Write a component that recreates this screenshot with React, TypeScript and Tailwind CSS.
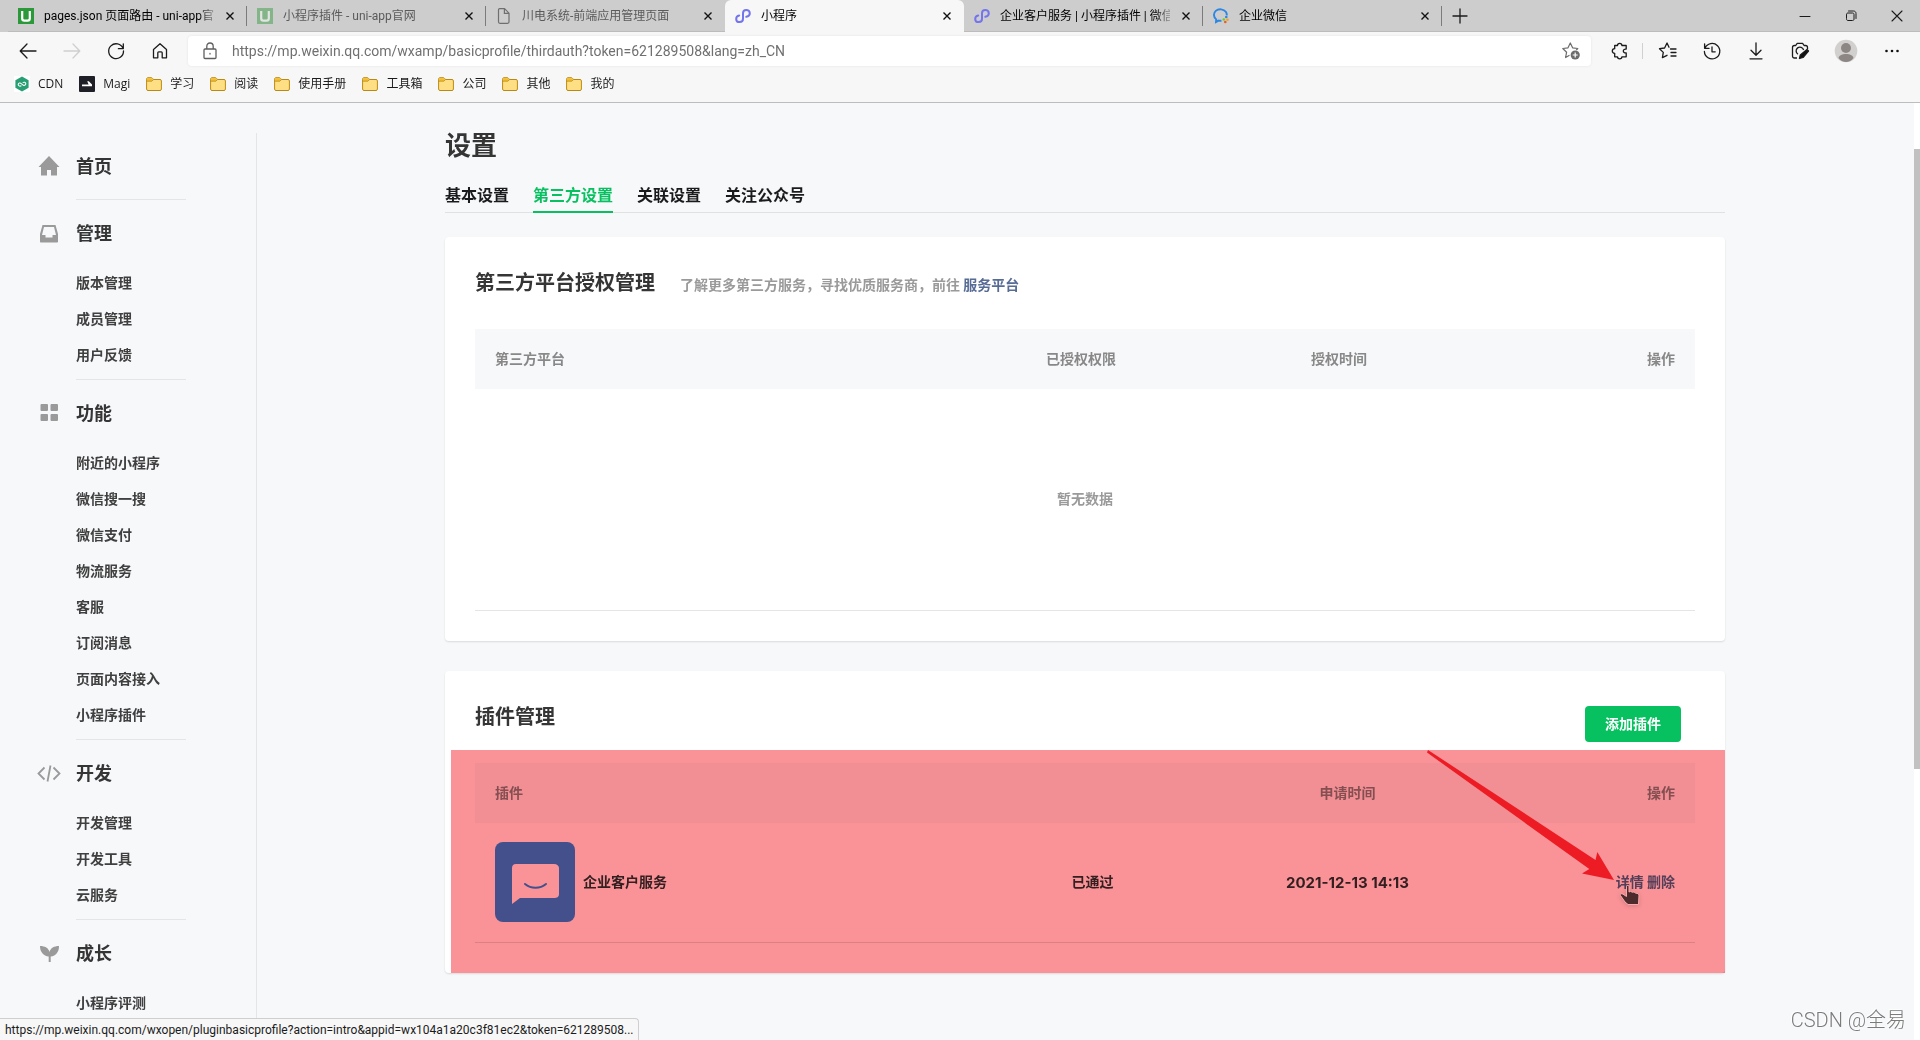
import React from "react";

const CJK = "font-['Inter','Noto_Sans_CJK_SC',sans-serif]";
const UI = "font-['Roboto','Noto_Sans_CJK_SC',sans-serif]";

type IconProps = { className?: string };

const UniIcon = ({ className = "" }: IconProps) => (
  <svg viewBox="0 0 16 16" className={`mr-0.5 h-4 w-4 ${className}`}>
    <rect width="16" height="16" fill="#2b9939" />
    <path d="M4.200 3v7.400c0 1.400.9 2.200 2.200 2.200h3.200c1.300 0 2.200-.8 2.200-2.200V3" fill="none" stroke="#fff" strokeWidth="2.200" />
  </svg>
);

const PageIcon = ({ className = "" }: IconProps) => (
  <svg viewBox="0 0 16 16" className={`mr-0.5 h-4 w-4 ${className}`} fill="none" stroke="#6f6f6f" strokeWidth="1.2">
    <path d="M3.500.7h5L13 5.200v8.600c0 .8-.5 1.500-1.400 1.500H3.900c-.9 0-1.400-.6-1.400-1.500V2.100C2.500 1.200 2.900.7 3.500.7zM8.400.9v4.500h4.500" />
  </svg>
);

const MiniIcon = ({ className = "" }: IconProps) => (
  <svg viewBox="0 0 16 16" className={`mr-0.5 h-4 w-4 ${className}`} fill="none" stroke="#7474ec" strokeWidth="2" strokeLinecap="round">
    <path d="M11.300 8.800c2-.3 3.500-1.600 3.500-3.500 0-2-1.600-3.400-3.500-3.400S8 3.300 8 5.300v5.400c0 2-1.500 3.400-3.400 3.400s-3.400-1.400-3.400-3.200c0-1.800 1.200-3 3-3.400" />
  </svg>
);

const WorkIcon = ({ className = "" }: IconProps) => (
  <svg viewBox="0 0 16 16" className={`mr-0.5 h-4 w-4 ${className}`} fill="none">
    <path d="M8.500 12.600c-.9.200-2 .2-3 0L3 14l.2-2.600C.4 9 .2 5.200 2.800 2.900c3-2.600 8-1.900 10 .9.8 1.200 1.100 2.300 1 3.500" stroke="#2a87e4" strokeWidth="1.900" />
    <circle cx="13.300" cy="9" r="1.300" fill="#2a87e4" />
    <circle cx="14.500" cy="11.800" r="1.300" fill="#f7a11b" />
    <circle cx="12.300" cy="14" r="1.300" fill="#f0562b" />
    <circle cx="10.800" cy="11.500" r="1.300" fill="#7cc623" />
  </svg>
);

const FolderIcon = () => (
  <svg viewBox="0 0 16 16" className="h-4 w-4">
    <path d="M.6 3.200C.6 2.200 1.100 1.700 2 1.700h3.300c.6 0 1 .2 1.300.7l.8 1.100H14c.9 0 1.400.5 1.400 1.400v8.200c0 .9-.5 1.400-1.400 1.400H2c-.9 0-1.400-.5-1.400-1.400z" fill="#ffdf83" stroke="#b98a13" />
    <path d="M1.100 5V3.300c0-.8.3-1.100 1-1.100h3.200c.4 0 .7.1.9.500l.9 1.200L6 5z" fill="#f3bd35" />
    <path d="M.8 5.200h5.100l1.500-1.500" fill="none" stroke="#b98a13" strokeWidth=".8" />
  </svg>
);

const CdnIcon = () => (
  <svg viewBox="0 0 16 16" className="h-4 w-4">
    <rect width="16" height="16" fill="#fff" />
    <path d="M8 .5l6.600 3.700v7.600L8 15.500l-6.600-3.700V4.200z" fill="#279e74" />
    <path d="M7.400 9.600c-1 1-3.200.6-3.200-1.100S6.400 6.600 7.300 7.600l1.500 1.300c1 .9 3 .4 3-1.200S9.700 5.800 8.700 6.700" fill="none" stroke="#fff" strokeWidth="1.100" />
  </svg>
);

const MagiIcon = () => (
  <svg viewBox="0 0 16 16" className="h-4 w-4">
    <rect width="16" height="16" rx="1" fill="#1f2027" />
    <path d="M3 8.500h10v1.800H3zM8.200 5.300h1.600L13 8.500H9.600z" fill="#fff" />
  </svg>
);

const CloseX = () => (
  <svg viewBox="0 0 8 8" className="h-2 w-2" stroke="#111" strokeWidth="1.400">
    <path d="M.5.5l7 7M7.500.5l-7 7" />
  </svg>
);

const Line = ({ d, className = "h-5 w-5", stroke = "#1b1b1b", w = 1.3 }: { d: string; className?: string; stroke?: string; w?: number }) => (
  <svg viewBox="0 0 20 20" className={className} fill="none" stroke={stroke} strokeWidth={w} strokeLinecap="round" strokeLinejoin="round">
    <path d={d} />
  </svg>
);

const tabs = [
  { title: "pages.json 页面路由 - uni-app官", icon: <UniIcon />, fade: true },
  { title: "小程序插件 - uni-app官网", icon: <UniIcon className="opacity-45" />, dim: true },
  { title: "川电系统-前端应用管理页面", icon: <PageIcon />, dim: true },
  { title: "小程序", icon: <MiniIcon />, active: true },
  { title: "企业客户服务 | 小程序插件 | 微信", icon: <MiniIcon />, fade: true },
  { title: "企业微信", icon: <WorkIcon /> },
];

function TabStrip() {
  return (
    <div className="flex h-8 items-stretch bg-[#cdcdcd] pl-2">
      {tabs.map((t, i) => (
        <div
          key={i}
          className={`flex w-[239px] min-w-0 items-center gap-2 pr-3 pl-2.5 ${t.active ? "rounded-t-md bg-[#f7f7f7]" : "border-b border-[#bcbcbc]"}`}
        >
          {t.icon}
          <button
            className={`h-5 min-w-0 flex-1 text-left text-xs leading-5 whitespace-nowrap ${t.fade ? "[mask-image:linear-gradient(to_right,black_calc(100%-16px),#0004)]" : ""} ${t.dim ? "text-[#5a5a5a]" : "text-black"}`}
          >
            {t.title}
          </button>
          <button aria-label="关闭标签页" className="grid h-4 w-4 place-items-center">
            <CloseX />
          </button>
          {[0, 1, 4, 5].includes(i) ? <span className="-mr-3 h-5 w-px bg-[#7b7b7b]" /> : <span className="-mr-3 w-px" />}
        </div>
      ))}
      <div className="flex flex-1 items-center justify-between border-b border-[#bcbcbc]">
        <button aria-label="新建标签页" className="ml-2 grid h-5 w-5 place-items-center">
          <Line d="M10 3v14M3 10h14" className="h-5 w-5" />
        </button>
        <div className="flex">
          <button aria-label="最小化" className="grid h-8 w-[46px] place-items-center">
            <Line d="M5 10.500h10" w={1} />
          </button>
          <button aria-label="还原" className="grid h-8 w-[46px] place-items-center">
            <Line d="M5.500 8.500c0-1 .5-1.500 1.500-1.500h4.500c1 0 1.500.5 1.500 1.500V13c0 1-.5 1.500-1.500 1.500H7c-1 0-1.500-.5-1.500-1.500zM7.500 5h5c1.500 0 2.500 1 2.500 2.500v5" w={1} />
          </button>
          <button aria-label="关闭" className="grid h-8 w-[46px] place-items-center">
            <Line d="M5 5l10 10M15 5L5 15" w={1.100} />
          </button>
        </div>
      </div>
    </div>
  );
}

function NavButton({ label, wide, children }: { label: string; wide?: boolean; children: React.ReactNode }) {
  return (
    <button aria-label={label} className={`grid h-8 place-items-center ${wide ? "w-12" : "w-11"}`}>
      {children}
    </button>
  );
}

function Toolbar() {
  return (
    <div className="flex h-[38px] items-center px-1.5">
      <NavButton label="后退"><Line d="M18 10H2.500M9 3L2.200 10 9 17" /></NavButton>
      <NavButton label="前进"><Line d="M2 10h15.500M11 3l6.800 7L11 17" stroke="#cfcfcf" /></NavButton>
      <NavButton label="刷新"><Line d="M17 7.500A7.400 7.400 0 1 0 17.500 10M17.300 2.800v4.900h-4.900" /></NavButton>
      <NavButton label="主页"><Line d="M3.500 8.500L10 2.700l6.500 5.800v8.300h-4.300v-5c0-.7-.4-1-1-1H8.800c-.6 0-1 .3-1 1v5H3.500z" /></NavButton>
      <div className="ml-1.5 flex h-[30px] flex-1 items-center rounded-[4px] bg-white pr-2.5 pl-3 shadow-[0_0_3px_rgba(0,0,0,0.08)]">
        <Line d="M5 8h10c.7 0 1 .3 1 1v7.500c0 .7-.3 1-1 1H5c-.7 0-1-.3-1-1V9c0-.7.3-1 1-1zM6.800 8V5.500C6.800 3.500 8 2 10 2s3.200 1.500 3.200 3.500V8M10 12.400v.6" stroke="#5f5f5f" />
        <input
          aria-label="地址栏"
          className="ml-3 min-w-0 flex-1 bg-transparent text-sm text-[#707070] outline-none"
          defaultValue="https://mp.weixin.qq.com/wxamp/basicprofile/thirdauth?token=621289508&lang=zh_CN"
        />
        <button aria-label="收藏此页">
          <svg viewBox="0 0 20 20" className="h-5 w-5" fill="none" stroke="#6c6c6c" strokeWidth="1.200" strokeLinejoin="round">
            <path d="M8.500 14.200L4.600 16.500l1-5.300L1.800 7.500l5.200-.7L9.300 2l2.300 4.800 5.200.7-1.500 1.500" />
            <circle cx="14.200" cy="14" r="4.600" fill="#6c6c6c" stroke="none" />
            <path d="M14.200 11.500v5M11.700 14h5" stroke="#fff" />
          </svg>
        </button>
      </div>
      <div className="flex items-center pl-[7px]">
        <NavButton label="扩展"><Line d="M7.500 4.500c0-1.300.9-2.200 2.200-2.200s2.200.9 2.200 2.200h4.300v3.600c-1.700-.3-2.900.6-2.900 1.900s1.200 2.200 2.900 1.900v3.900h-4.300c0 1.200-.9 2-2.200 2s-2.200-.8-2.200-2H4.700v-3.500C3.200 12.200 2.300 11.300 2.300 10s.9-2.200 2.400-2.300V4.500z" /></NavButton>
        <span className="mr-[3px] h-4 w-px bg-[#d0d0d0]" />
        <NavButton label="收藏夹"><Line d="M12.500 8H18M13 11.500h5M13 15h5M11 6.200L9 2 6.600 7 1.500 7.700l3.800 3.700-.9 5.300L9 14.300" /></NavButton>
        <NavButton label="历史记录"><Line d="M3 7.200A7.700 7.700 0 1 1 2.400 10.500M2.600 2.800v4.500h4.500M10 6v4.800h3.200" /></NavButton>
        <NavButton label="下载"><Line d="M10 1.800v12M5 9.200l5 5 5-5M4 17.800h12" /></NavButton>
        <NavButton label="网页捕获">
          <svg viewBox="0 0 20 20" className="h-5 w-5" fill="none" stroke="#1b1b1b" strokeWidth="1.300" strokeLinejoin="round">
            <path d="M7 17H4.500c-1.300 0-2-.7-2-2V6.500c0-1.300.7-2 2-2h1.200L7.200 2.300h5.400l1.500 2.200h1.400c1.300 0 2 .7 2 2V8" />
            <path d="M8 13.200A3.800 3.800 0 1 1 13.600 9" />
            <path d="M17 8.500l1.500 1.500-5.500 6.500-3.500 1 .8-3.500z" fill="#111" />
          </svg>
        </NavButton>
        <NavButton label="用户配置" wide>
          <svg viewBox="0 0 24 24" className="h-6 w-6">
            <circle cx="12" cy="12" r="11.300" fill="#d2d0ce" />
            <circle cx="12" cy="9" r="5" fill="#8c8784" />
            <path d="M4.500 19c.8-3 3.700-4 7.500-4s6.700 1 7.500 4c-1.800 2.600-4.600 4-7.500 4s-5.700-1.400-7.500-4z" fill="#8c8784" />
          </svg>
        </NavButton>
        <NavButton label="更多">
          <svg viewBox="0 0 20 20" className="h-5 w-5" fill="#111">
            <circle cx="4.500" cy="10" r="1.300" /><circle cx="10" cy="10" r="1.300" /><circle cx="15.500" cy="10" r="1.300" />
          </svg>
        </NavButton>
      </div>
    </div>
  );
}

const bookmarks = ["学习", "阅读", "使用手册", "工具箱", "公司", "其他", "我的"];

function Bookmarks() {
  const item = "flex items-center gap-2 text-xs text-[#1b1b1b]";
  return (
    <nav className="flex h-[33px] items-center gap-4 border-b border-[#bdbdbd] pb-1 pl-3.5 font-['Open_Sans','Noto_Sans_CJK_SC',sans-serif]">
      <a href="#" className={item}><CdnIcon />CDN</a>
      <a href="#" className={item}><MagiIcon />Magi</a>
      {bookmarks.map((b) => (
        <a key={b} href="#" className={item}><FolderIcon />{b}</a>
      ))}
    </nav>
  );
}

const G = "#9a9a9a";
const menu = [
  {
    title: "首页",
    icon: <path d="M12 1L1.500 12H4v8.500h6V15h4v5.500h6V12h2.500z" fill={G} />,
    items: [],
  },
  {
    title: "管理",
    icon: <path fillRule="evenodd" d="M5.500 3h13L21 12v7.500c0 .6-.4 1-1 1H4c-.6 0-1-.4-1-1V12zM7 5l-2 8h3.500v2.500h7V13H19l-2-8z" fill={G} />,
    items: ["版本管理", "成员管理", "用户反馈"],
  },
  {
    title: "功能",
    icon: <path d="M4.500 2H10a1 1 0 0 1 1 1v5a1 1 0 0 1-1 1H4.500a1 1 0 0 1-1-1V3a1 1 0 0 1 1-1zM14.500 2H20a1 1 0 0 1 1 1v5a1 1 0 0 1-1 1h-5.500a1 1 0 0 1-1-1V3a1 1 0 0 1 1-1zM4.500 12H10a1 1 0 0 1 1 1v5a1 1 0 0 1-1 1H4.500a1 1 0 0 1-1-1v-5a1 1 0 0 1 1-1zM14.500 12H20a1 1 0 0 1 1 1v5a1 1 0 0 1-1 1h-5.500a1 1 0 0 1-1-1v-5a1 1 0 0 1 1-1z" fill={G} />,
    items: ["附近的小程序", "微信搜一搜", "微信支付", "物流服务", "客服", "订阅消息", "页面内容接入", "小程序插件"],
  },
  {
    title: "开发",
    icon: <path d="M7.500 5.500L1.500 11.500l6 6M16.500 5.500l6 6-6 6M13.500 3.500l-3 16" fill="none" stroke={G} strokeWidth="1.800" />,
    items: ["开发管理", "开发工具", "云服务"],
  },
  {
    title: "成长",
    icon: <path d="M3 4c5 0 8.600 2 9.500 6 1-4 4.500-6 9.500-6 0 6-3 10.200-8.300 10.400V20h-2v-5.600C6.500 14.200 3 10 3 4z" fill={G} />,
    items: ["小程序评测"],
  },
];

function Sidebar() {
  return (
    <aside className="mt-[30px] w-[257px] shrink-0 self-stretch border-r border-[#e4e5e7]">
      {menu.map((s) => (
        <section key={s.title} className="pr-[70px] pl-[37px]">
          <a href="#" className="flex h-[54px] items-center pt-3.5">
            <svg viewBox="0 0 24 24" className="mr-[15px] h-6 w-6">{s.icon}</svg>
            <span className="text-lg leading-7 font-bold text-[#353535]">{s.title}</span>
          </a>
          <ul className={`ml-[39px] border-b border-[#e4e5e7] ${s.items.length ? "pt-[11px] pb-1.5" : "pt-3"}`}>
            {s.items.map((it) => (
              <li key={it} className="h-9 text-sm leading-9 font-bold text-[#404040]">
                <a href="#">{it}</a>
              </li>
            ))}
          </ul>
        </section>
      ))}
    </aside>
  );
}

const th = "h-[60px] bg-[#f7f8fa] text-sm font-bold text-[#888]";

function Main() {
  return (
    <main className="flex min-w-0 flex-1 justify-center pr-px font-bold text-[#353535]">
      <div className="w-full max-w-[1280px] pt-6">
        <h1 className="text-[26px] leading-[38px]">设置</h1>
        <nav className="mt-4 flex h-8 gap-6 border-b border-[#e0e1e3] text-base leading-7 text-[#1a1b1c]">
          <a href="#">基本设置</a>
          <a href="#" className="h-8 border-b-2 border-[#07c160] text-[#07c160]">第三方设置</a>
          <a href="#">关联设置</a>
          <a href="#">关注公众号</a>
        </nav>

        <section className="mt-6 rounded-[4px] bg-white px-[30px] pt-8 pb-[30px] shadow-[0_1px_2px_rgba(0,0,0,0.12)]">
          <div className="flex h-7 items-center gap-[25px]">
            <h2 className="text-xl leading-7">第三方平台授权管理</h2>
            <p className="mt-1 text-sm text-[#9a9a9a]">
              了解更多第三方服务，寻找优质服务商，前往 <a href="#" className="text-[#576b95]">服务平台</a>
            </p>
          </div>
          <table className="mt-8 w-full table-fixed border-b border-[#e4e5e7]">
            <colgroup><col /><col className="w-[258px]" /><col className="w-[258px]" /><col className="w-[227px]" /></colgroup>
            <thead>
              <tr>
                <th className={`${th} pl-5 text-left`}>第三方平台</th>
                <th className={`${th} text-center`}>已授权权限</th>
                <th className={`${th} text-center`}>授权时间</th>
                <th className={`${th} pr-5 text-right`}>操作</th>
              </tr>
            </thead>
            <tbody>
              <tr><td colSpan={4} className="h-[221px] text-center text-sm text-[#9a9a9a]">暂无数据</td></tr>
            </tbody>
          </table>
        </section>

        <section className="relative mt-[30px] rounded-[4px] bg-white px-[30px] pt-8 pb-[30px] shadow-[0_1px_2px_rgba(0,0,0,0.12)]">
          <div className="flex items-start justify-between pr-3.5">
            <h2 className="text-xl leading-7">插件管理</h2>
            <button className="mt-[3px] h-9 w-24 rounded-[4px] bg-[#07c160] text-sm text-white">添加插件</button>
          </div>
          <table className="mt-[21px] w-full table-fixed border-b border-[#dfdfdf]">
            <colgroup><col /><col className="w-[255px]" /><col className="w-[255px]" /><col className="w-[220px]" /></colgroup>
            <thead>
              <tr>
                <th className={`${th} pl-5 text-left`}>插件</th>
                <th className={th} />
                <th className={`${th} text-center`}>申请时间</th>
                <th className={`${th} pr-5 text-right`}>操作</th>
              </tr>
            </thead>
            <tbody>
              <tr className="text-sm text-[#353535]">
                <td className="h-[120px] pl-5">
                  <div className="flex items-center gap-2">
                    <svg viewBox="0 0 80 80" className="h-20 w-20">
                      <rect width="80" height="80" rx="8" fill="#448beb" />
                      <path d="M21 22h38c3 0 5 2 5 4v26c0 3-2 4-5 4H25l-8 6V26c0-2 1-4 4-4z" fill="#fff" />
                      <path d="M30 42c6 5 15 5 21 0" fill="none" stroke="#448beb" strokeWidth="2" strokeLinecap="round" />
                    </svg>
                    企业客户服务
                  </div>
                </td>
                <td className="text-center">已通过</td>
                <td className="text-center text-[15px] font-bold">2021-12-13 14:13</td>
                <td className="pr-5 text-right text-[#576b95]"><a href="#">详情</a> <a href="#">删除</a></td>
              </tr>
            </tbody>
          </table>

          <div className="pointer-events-none absolute top-[79px] right-0 bottom-0 left-1.5 bg-[#f99397] mix-blend-multiply" />
          <svg viewBox="0 0 200 150" className="pointer-events-none absolute top-[79px] right-[100px] h-[150px] w-[200px]">
            <path d="M3 0L170.500 110l1.800-8L189 130l-32-6.500 7.300-4.500L2 2.500z" fill="#ed1c24" />
          </svg>
          <svg viewBox="0 0 24 24" className="pointer-events-none absolute top-[213px] right-[83px] h-6 w-6 drop-shadow-sm">
            <path d="M8.500 2.500c0-1.500 2.500-1.500 2.500 0V8l1.500-.6 2 .9 1.500-.4 1.500 1.200 2.500.4 1 1.500-.5 9.500H10L7 18l-4.500-6.500c-.7-1.500 1.300-2.500 2.500-1.300l3.500 2.300z" fill="#4d2b2d" stroke="#f9a9ab" />
          </svg>
        </section>
      </div>
    </main>
  );
}

export default function App() {
  return (
    <div className={`relative flex h-screen flex-col overflow-hidden bg-[#f7f8fa] ${CJK}`}>
      <header className={`shrink-0 bg-[#f7f7f7] ${UI}`}>
        <TabStrip />
        <Toolbar />
        <Bookmarks />
      </header>
      <div className="flex min-h-0 flex-1 overflow-hidden">
        <Sidebar />
        <Main />
        <div className="w-1.5 shrink-0 bg-white pt-[46px]">
          <div className="h-[620px] bg-[#c1c1c1]" />
        </div>
      </div>
      <div className={`absolute bottom-0 left-0 h-[22px] rounded-tr-[4px] border-t border-r border-[#cfcfcf] bg-[#f7f7f7] pr-1 pl-[5px] text-xs leading-[22px] text-[#1b1b1b] ${UI}`}>
        https://mp.weixin.qq.com/wxopen/pluginbasicprofile?action=intro&amp;appid=wx104a1a20c3f81ec2&amp;token=621289508...
      </div>
      <div className="absolute right-3.5 bottom-1.5 font-['Roboto','Noto_Sans_CJK_SC',sans-serif] text-xl leading-7 font-light text-[#7b7b7b] [text-shadow:-1px_-1px_0_#fff]">
        CSDN @全易
      </div>
    </div>
  );
}
